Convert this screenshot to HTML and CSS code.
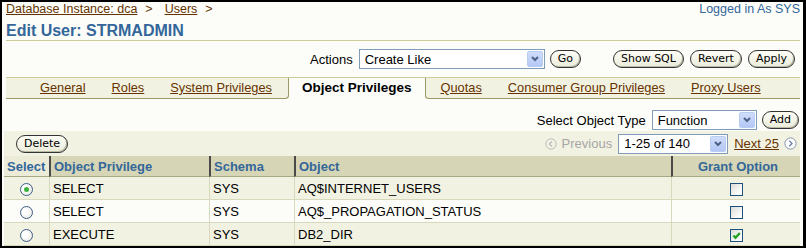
FILE: index.html
```html
<!DOCTYPE html>
<html lang="en">
<head>
  <meta charset="UTF-8">
  <title>Edit User: STRMADMIN</title>
  <link rel="stylesheet" href="styles.css">
</head>
<body>
<div class="frame">

  <div class="top-row">
    <div class="crumbs">
      <a href="#">Database Instance: dca</a><span class="sep">&gt;</span><a href="#">Users</a><span class="sep">&gt;</span>
    </div>
    <div class="login">Logged in As SYS</div>
  </div>

  <h1 class="title">Edit User: STRMADMIN</h1>

  <div class="actions">
    <span class="label">Actions</span>
    <div class="select select-actions">
      <span>Create Like</span>
      <span class="drop"><svg width="8" height="6" viewBox="0 0 8 6"><path d="M1 1 L4 4 L7 1" fill="none" stroke="#4d6185" stroke-width="2"/></svg></span>
    </div>
    <button class="btn btn-go">Go</button>
    <div class="btn-group">
      <button class="btn">Show SQL</button>
      <button class="btn">Revert</button>
      <button class="btn">Apply</button>
    </div>
  </div>

  <div class="tabs">
    <span class="tab-fill lead"></span>
    <a class="tab" href="#">General</a>
    <a class="tab" href="#">Roles</a>
    <a class="tab before-sel" href="#">System Privileges</a>
    <span class="tab sel">Object Privileges</span>
    <a class="tab after-sel" href="#">Quotas</a>
    <a class="tab" href="#">Consumer Group Privileges</a>
    <a class="tab" href="#">Proxy Users</a>
    <span class="tab-fill"></span>
  </div>

  <div class="type-row">
    <span class="label">Select Object Type</span>
    <div class="select select-type">
      <span>Function</span>
      <span class="drop"><svg width="8" height="6" viewBox="0 0 8 6"><path d="M1 1 L4 4 L7 1" fill="none" stroke="#4d6185" stroke-width="2"/></svg></span>
    </div>
    <button class="btn">Add</button>
  </div>

  <div class="toolbar">
    <button class="btn">Delete</button>
    <div class="pager">
      <svg class="nav-icon" width="12" height="12" viewBox="0 0 12 12"><circle cx="6" cy="6" r="5.2" fill="none" stroke="#bdbdbd"/><path d="M7 3.5 L4.5 6 L7 8.5" fill="none" stroke="#bdbdbd" stroke-width="1.3"/></svg>
      <span class="prev">Previous</span>
      <div class="select select-page">
        <span>1-25 of 140</span>
        <span class="drop"><svg width="8" height="6" viewBox="0 0 8 6"><path d="M1 1 L4 4 L7 1" fill="none" stroke="#4d6185" stroke-width="2"/></svg></span>
      </div>
      <a class="next" href="#">Next 25</a>
      <svg class="nav-icon next-icon" width="13" height="13" viewBox="0 0 13 13"><circle cx="6.5" cy="6.5" r="5.6" fill="#fff" stroke="#8593ad"/><path d="M5.3 3.8 L8 6.5 L5.3 9.2" fill="none" stroke="#6b7fa3" stroke-width="1.3"/></svg>
    </div>
  </div>

  <table class="grid">
    <colgroup>
      <col class="c-select">
      <col class="c-priv">
      <col class="c-schema">
      <col class="c-object">
      <col class="c-grant">
    </colgroup>
    <thead>
      <tr>
        <th class="th-select">Select</th>
        <th>Object Privilege</th>
        <th>Schema</th>
        <th>Object</th>
        <th class="center">Grant Option</th>
      </tr>
    </thead>
    <tbody>
      <tr>
        <td class="center"><span class="radio on"></span></td>
        <td>SELECT</td>
        <td>SYS</td>
        <td>AQ$INTERNET_USERS</td>
        <td class="center"><span class="check"></span></td>
      </tr>
      <tr>
        <td class="center"><span class="radio"></span></td>
        <td>SELECT</td>
        <td>SYS</td>
        <td>AQ$_PROPAGATION_STATUS</td>
        <td class="center"><span class="check"></span></td>
      </tr>
      <tr>
        <td class="center"><span class="radio"></span></td>
        <td>EXECUTE</td>
        <td>SYS</td>
        <td>DB2_DIR</td>
        <td class="center"><span class="check"><svg width="11" height="11" viewBox="0 0 11 11"><path d="M2.5 5.5 L4.5 7.8 L8.8 3" fill="none" stroke="#21a121" stroke-width="2.2"/></svg></span></td>
      </tr>
    </tbody>
  </table>

</div>
</body>
</html>
```

FILE: styles.css
```css
* { box-sizing: border-box; }

body {
  margin: 0;
  background: #fff;
  font-family: "Liberation Sans", Arial, sans-serif;
  font-size: 13px;
  color: #000;
}

a {
  color: #663300;
  text-decoration: underline;
}

.frame {
  width: 806px;
  height: 248px;
  border: 2px solid #000;
  border-right-width: 3px;
  padding: 0 3px 0 4px;
  background: #fcfdf9;
  overflow: hidden;
}

/* header */

.top-row {
  display: flex;
  justify-content: space-between;
  font-size: 12.5px;
  line-height: 15px;
}

.sep {
  margin: 0 12px 0 8px;
  color: #663300;
}

.login {
  color: #336699;
}

.title {
  margin: 4px 0 0;
  font-size: 16px;
  line-height: 19px;
  font-weight: bold;
  color: #336699;
  border-bottom: 1px solid #cccc99;
}

/* controls */

.actions,
.type-row {
  display: flex;
  align-items: center;
  justify-content: flex-end;
  height: 20px;
}

.actions {
  margin-top: 8px;
  padding-right: 5px;
}

.type-row {
  margin-top: 11px;
  padding-right: 1px;
}

.label {
  margin-right: 6px;
}

.select {
  display: flex;
  align-items: center;
  height: 20px;
  padding-left: 5px;
  border: 1px solid #7f9db9;
  background: #fff;
  font-size: 13px;
}

.select .drop {
  display: flex;
  align-items: center;
  justify-content: center;
  margin-left: auto;
  margin-right: 1px;
  width: 16px;
  height: 16px;
  border: 1px solid #b8cbf1;
  border-radius: 2px;
  background: linear-gradient(#d0ddfb, #b4c8f6);
}

.select-actions { width: 186px; }
.select-type { width: 105px; }
.select-page { width: 110px; }

.btn {
  height: 18px;
  padding: 0 7px;
  border: 1px solid #333;
  border-radius: 9px;
  background: linear-gradient(#fdfdf6, #ebebdb);
  box-shadow: inset -1px -1px 0 #b9b9a4;
  font-family: "DejaVu Sans", sans-serif;
  font-size: 11px;
  line-height: 16px;
  color: #000;
}

.btn-go { margin-left: 5px; }
.select-type + .btn { margin-left: 5px; }

.btn-group {
  display: flex;
  gap: 6px;
  margin-left: 32px;
}

/* tabs */

.tabs {
  display: flex;
  margin-top: 8px;
  border-top: 1px solid #cccc99;
  background: #f2f2e2;
}

.tab,
.tab-fill {
  height: 21px;
  border-bottom: 1px solid #999966;
}

.tab {
  padding: 0 13px;
  font-size: 12.8px;
  line-height: 20px;
  white-space: nowrap;
}

.tab-fill { flex: 1; }
.tab-fill.lead { flex: 0 0 21px; }

.tab.before-sel {
  padding-right: 16px;
  border-right: 1px solid #999966;
  border-bottom-right-radius: 4px;
}

.tab.after-sel {
  padding-left: 15px;
  border-left: 1px solid #999966;
  border-bottom-left-radius: 4px;
}

.tab.sel {
  padding: 0 13px;
  border-bottom: none;
  background: #fcfdf9;
  font-size: 13.5px;
  font-weight: bold;
}

/* list toolbar */

.toolbar {
  display: flex;
  align-items: center;
  justify-content: space-between;
  height: 25px;
  margin: 1px 0 0 -2px;
  padding: 0 3px 0 12px;
  background: #f2f2e2;
}

.pager {
  display: flex;
  align-items: center;
}

.prev {
  margin: 0 6px 0 5px;
  color: #a6a6a6;
}

.next {
  margin: 0 5px 0 6px;
}

/* table */

.grid {
  width: 796px;
  margin-left: -2px;
  border-collapse: separate;
  border-spacing: 0;
  table-layout: fixed;
}

.c-select { width: 45px; }
.c-priv { width: 160px; }
.c-schema { width: 85px; }
.c-object { width: 377px; }
.c-grant { width: 129px; }

.grid th {
  height: 21px;
  padding: 0 0 0 3px;
  background: #d6d6b6;
  border-left: 2px solid #4a4a4a;
  border-bottom: 1px solid #a8a884;
  color: #336699;
  font-weight: bold;
  text-align: left;
}

.grid th.th-select {
  padding-left: 3px;
  background: #ebebd8;
  border-left: none;
}

.grid th.center { text-align: center; }

.grid td {
  height: 23px;
  padding: 0 0 0 3px;
  border-left: 1px solid #d8d8bc;
  border-bottom: 1px solid #d8d8bc;
  white-space: nowrap;
}

.grid td:first-child { border-left: none; }

.grid tbody tr:nth-child(odd) td { background: #f2f2e2; }
.grid tbody tr:nth-child(even) td { background: #fcfdf9; }

.grid td.center {
  padding: 0;
  text-align: center;
}

.radio {
  display: inline-block;
  vertical-align: middle;
  width: 13px;
  height: 13px;
  border: 1px solid #3d5f86;
  border-radius: 50%;
  background: radial-gradient(circle at 40% 40%, #fff 30%, #dcdcd4);
  position: relative;
}

.radio.on::after {
  content: '';
  position: absolute;
  top: 3px;
  left: 3px;
  width: 5px;
  height: 5px;
  border-radius: 50%;
  background: #3cb43c;
}

.check {
  display: inline-flex;
  align-items: center;
  justify-content: center;
  vertical-align: middle;
  width: 13px;
  height: 13px;
  border: 1px solid #1c5180;
  background: linear-gradient(135deg, #dcdcd5, #fbfbfb 75%);
}
```
